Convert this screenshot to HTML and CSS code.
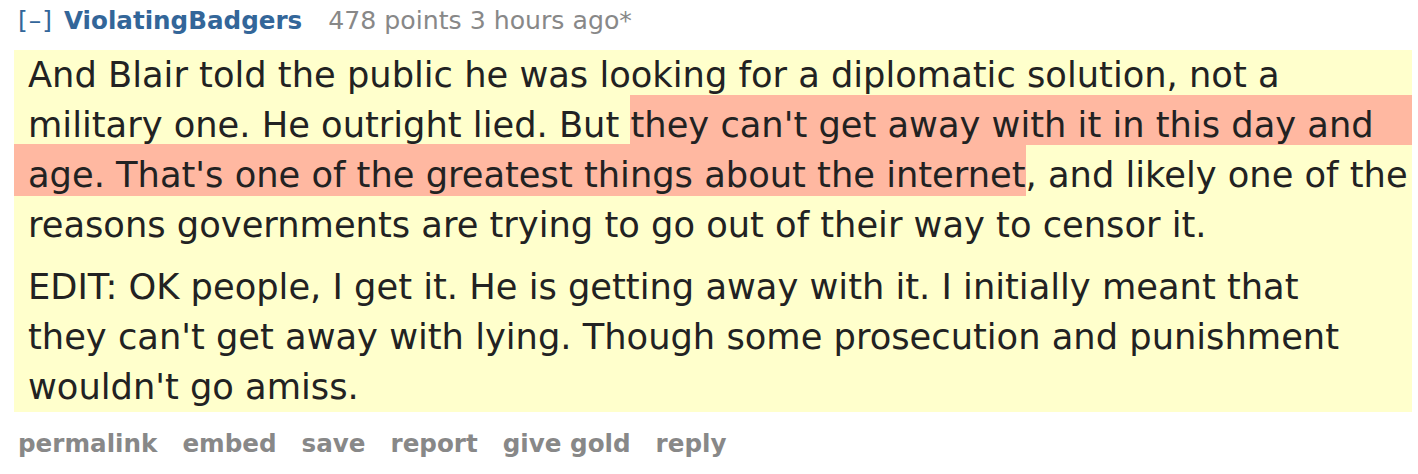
FILE: index.html
```html
<!DOCTYPE html>
<html lang="en">
<head>
<meta charset="utf-8">
<title>Comment</title>
<link rel="stylesheet" href="styles.css">
</head>
<body>
<div class="comment">
  <div class="tagline">
    <a class="expand">[–]</a>
    <a class="author">ViolatingBadgers</a>
    <span class="score">478 points 3 hours ago*</span>
  </div>
  <div class="md">
    <p>And Blair told the public he was looking for a diplomatic solution, not a military one. He outright lied. But <span class="hl hl-a">they can't get away with it in this day and</span> <span class="hl hl-b">age. That's one of the greatest things about the internet</span>, and likely one of the reasons governments are trying to go out of their way to censor it.</p>
    <p>EDIT: OK people, I get it. He is getting away with it. I initially meant that<br>they can't get away with lying. Though some prosecution and punishment wouldn't go amiss.</p>
  </div>
  <ul class="buttons">
    <li>permalink</li>
    <li>embed</li>
    <li>save</li>
    <li>report</li>
    <li>give gold</li>
    <li>reply</li>
  </ul>
</div>
</body>
</html>
```
FILE: styles.css
```css
html, body {
  margin: 0;
  padding: 0;
  background: #ffffff;
}

body {
  font-family: "DejaVu Sans", Verdana, sans-serif;
  color: #222222;
}

.comment {
  padding: 0 6px 0 14px;
}

.tagline {
  padding-left: 4px;
  font-size: 25px;
  line-height: 42px;
  margin-bottom: 8px;
  white-space: nowrap;
}

.expand {
  color: #369;
  margin-right: 3px;
  letter-spacing: 1px;
}

.author {
  color: #369;
  font-weight: bold;
  font-size: 24.6px;
  margin-right: 18px;
}

.score {
  color: #888888;
  font-size: 25.2px;
}

.md {
  background: #ffffcc;
  padding: 0 0 0 14px;
  overflow: hidden;
  font-size: 35.25px;
  line-height: 50px;
  color: #222222;
}

.md p {
  margin: 0;
}

.md p + p {
  margin-top: 12px;
}

.hl {
  background: #ffb8a1;
}

.hl-a {
  padding: 9px 200px 0 0;
  margin-right: -200px;
}

.hl-b {
  padding: 10px 0 1px 100px;
  margin-left: -100px;
}

.buttons {
  list-style: none;
  margin: 12px 0 0 0;
  padding: 0 0 0 4px;
  display: flex;
  gap: 25px;
  font-size: 24.6px;
  font-weight: bold;
  line-height: 40px;
  color: #888888;
}
```
